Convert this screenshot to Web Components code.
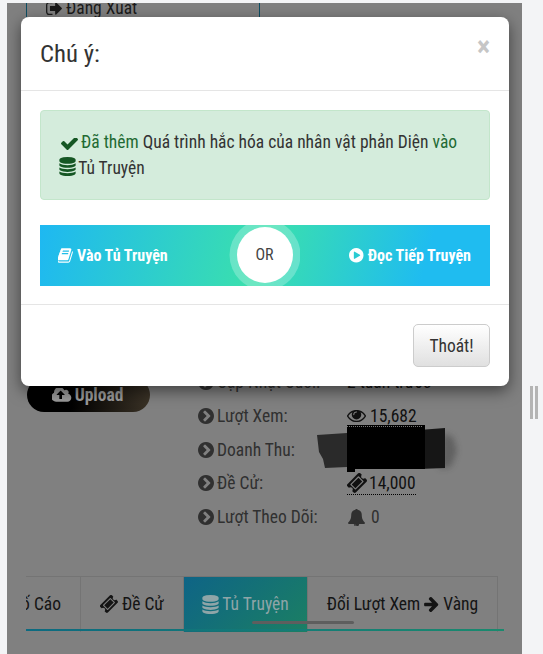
<!DOCTYPE html>
<html><head><meta charset="utf-8"><style>
html,body{margin:0;height:100%;background:#f3f4f6;overflow:hidden}
</style></head><body>
<app-page></app-page>
<script>
const FONT = `"Roboto Condensed","Liberation Sans Narrow",Roboto,sans-serif`;
const P = {
 check:['120 425 1552 1070','M1671 566q0 40-28 68l-724 724-136 136q-28 28-68 28t-68-28l-136-136-362-362q-28-28-28-68t28-68l136-136q28-28 68-28t68 28l294 295 656-657q28-28 68-28t68 28l136 136q28 28 28 68z'],
 db:['128 0 1536 1792','M896 768q237 0 443-43t325-127v170q0 69-103 128t-280 93.500-385 34.500-385-34.500-280-93.500-103-128v-170q119 84 325 127t443 43zm0 768q237 0 443-43t325-127v170q0 69-103 128t-280 93.500-385 34.500-385-34.500-280-93.500-103-128v-170q119 84 325 127t443 43zm0-384q237 0 443-43t325-127v170q0 69-103 128t-280 93.500-385 34.500-385-34.500-280-93.500-103-128v-170q119 84 325 127t443 43zm0-1152q208 0 385 34.500t280 93.500 103 128v128q0 69-103 128t-280 93.500-385 34.500-385-34.500-280-93.500-103-128v-128q0-69 103-128t280-93.500 385-34.500z'],
 book:['100 130 1580 1540','M1639 478q40 57 18 129l-275 906q-19 64-76.500 107.500t-122.500 43.500h-923q-77 0-148.500-53.500t-99.500-131.500q-24-67-2-127 0-4 3-27t4-37q1-8-3-21.500t-3-19.500q2-11 8-21t16.500-23.500 16.500-23.500q23-38 45-91.500t30-91.500q3-10 .5-30t-.5-28q3-11 17-28t17-23q21-36 42-92t25-90q1-9-2.500-32t.5-28q4-13 22-30.500t22-22.500q19-26 42.500-84.500t27.500-96.500q1-8-3-25.500t-2-26.500q2-8 9-18t18-23 17-21q8-12 16.500-30.500t15-35 16-36 19.500-32 26.500-23.500 36-11.500 47.500 5.500l-1 3q38-9 51-9h761q74 0 114 56t18 130l-274 906q-36 119-71.500 153.500t-128.500 34.500h-869q-27 0-38 15-11 16-1 43 24 70 144 70h923q29 0 56-15.500t35-41.500l300-987q7-22 5-57 38 15 59 43zm-1064 2q-4 13 2 22.500t20 9.500h608q13 0 25.500-9.500t16.500-22.500l21-64q4-13-2-22.500t-20-9.500h-608q-13 0-25.500 9.500t-16.500 22.500zm-83 256q-4 13 2 22.500t20 9.500h608q13 0 25.500-9.500t16.500-22.500l21-64q4-13-2-22.500t-20-9.500h-608q-13 0-25.500 9.500t-16.500 22.500z'],
 play:['128 128 1536 1536','M896 128q209 0 385.500 103t279.500 279.500 103 385.500-103 385.500-279.500 279.500-385.500 103-385.500-103-279.500-279.500-103-385.500 103-385.500 279.500-279.500 385.500-103zm384 823q32-18 32-55t-32-55l-544-320q-31-19-64-1-32 19-32 56v640q0 37 32 56 16 8 32 8 17 0 32-9z'],
 next:['128 128 1536 1536','M845 1395l454-454q19-19 19-45t-19-45l-454-454q-19-19-45-19t-45 19l-102 102q-19 19-19 45t19 45l307 307-307 307q-19 19-19 45t19 45l102 102q19 19 45 19t45-19zm819-499q0 209-103 385.500t-279.500 279.500-385.500 103-385.500-103-279.500-279.500-103-385.500 103-385.500 279.500-279.500 385.500-103 385.500 103 279.500 279.500 103 385.500z'],
 eye:['0 400 1792 1120','M1664 960q-152-236-381-353 61 104 61 225 0 185-131.500 316.500t-316.500 131.500-316.500-131.500-131.500-316.500q0-121 61-225-229 117-381 353 133 205 333.500 326.500t434.500 121.500 434.500-121.500 333.500-326.500zm-720-384q0-20-14-34t-34-14q-125 0-214.500 89.500t-89.500 214.500q0 20 14 34t34 14 34-14 14-34q0-86 61-147t147-61q20 0 34-14t14-34zm848 384q0 34-20 69-140 230-376.500 368.500t-499.500 138.500-499.500-139-376.500-368q-20-35-20-69t20-69q140-229 376.500-368t499.500-139 499.500 139 376.500 368q20 35 20 69z'],
 ticket:['60 60 1680 1680','M1024 452l316 316-572 572-316-316zm-211 979l618-618q19-19 19-45t-19-45l-362-362q-18-18-45-18t-45 18l-618 618q-19 19-19 45t19 45l362 362q18 18 45 18t45-18zm889-637l-907 908q-37 37-90.500 37t-90.500-37l-126-126q56-56 56-136t-56-136-136-56-136 56l-125-126q-37-37-37-90.500t37-90.500l907-906q37-37 90.500-37t90.500 37l125 125q-56 56-56 136t56 136 136 56 136-56l126 125q37 37 37 90.500t-37 90.500z'],
 bell:['64 64 1664 1664','M912 1696q0-16-16-16-59 0-101.500-42.500t-42.500-101.500q0-16-16-16t-16 16q0 73 51.500 124.500t124.500 51.500q16 0 16-16zm816-288q0 52-38 90t-90 38h-448q0 106-75 181t-181 75-181-75-75-181h-448q-52 0-90-38t-38-90q50-42 91-88t85-119.500 74.500-158.500 50-206 19.500-260q0-152 117-282.500t307-158.500q-8-19-8-39 0-40 28-68t68-28 68 28 28 68q0 20-8 39 190 28 307 158.500t117 282.500q0 139 19.500 260t50 206 74.500 158.500 85 119.500 91 88z'],
 arrow:['192 181 1408 1558','M1600 960q0 54-37 91l-651 651q-39 37-91 37-51 0-90-37l-75-75q-38-38-38-91t38-91l293-293h-704q-52 0-84.500-37.500t-32.500-90.500v-128q0-53 32.500-90.500t84.500-37.500h704l-293-294q-38-36-38-90t38-90l75-75q38-38 90-38 53 0 91 38l651 651q37 35 37 90z'],
 cloud:['0 256 1920 1280','M1216 864q0-14-9-23l-352-352q-9-9-23-9t-23 9l-351 351q-10 12-10 24 0 14 9 23t23 9h224v352q0 13 9.500 22.500t22.500 9.500h192q13 0 22.500-9.500t9.500-22.500v-352h224q13 0 22.500-9.500t9.500-22.500zm640 288q0 159-112.500 271.500t-271.500 112.500h-1088q-185 0-316.500-131.500t-131.500-316.500q0-130 70-240t188-165q-2-30-2-43 0-212 150-362t362-150q156 0 285.500 87t188.500 231q71-62 166-62 106 0 181 75t75 181q0 76-41 138 130 31 213.500 135.500t83.500 238.500z'],
 logout:['64 256 1568 1280','M704 1440q0 4 1 20t.5 26.500-3 23.500-10 19.500-20.500 6.500h-320q-119 0-203.500-84.500t-84.500-203.500v-704q0-119 84.500-203.500t203.500-84.500h320q13 0 22.500 9.500t9.500 22.500q0 4 1 20t.5 26.500-3 23.500-10 19.500-20.500 6.500h-320q-66 0-113 47t-47 113v704q0 66 47 113t113 47h312l11.500 1 11.500 3 8 5.500 7 9 2 13.500zm928-544q0 26-19 45l-544 544q-19 19-45 19t-45-19-19-45v-288h-448q-26 0-45-19t-19-45v-384q0-26 19-45t45-19h448v-288q0-26 19-45t45-19 45 19l544 544q19 19 19 45z']
};
const ic=(n,w,h,st='')=>`<svg viewBox="${P[n][0]}" width="${w}" height="${h}" style="flex:none;${st}"><path d="${P[n][1]}" fill="currentColor"/></svg>`;
class BaseEl extends HTMLElement{
  render(html){ this.attachShadow({mode:'open'}).innerHTML=html; }
}
class PageBackdrop extends BaseEl{ connectedCallback(){ this.render(`
<style>
:host{display:block;position:relative;width:515px;height:651px;margin:3px 0 0 7px;background:#808080;color:#1c1c1c;font:17.5px/20px ${FONT};overflow:hidden}
.top{display:flex;align-items:center;gap:4px;width:234px;height:16px;margin-left:19px;padding:0 0 2px 19px;box-sizing:border-box;border:solid #0e4e63;border-width:0 1px;margin-top:-2px;color:#1a1a1a}
.mid{display:flex;padding:0 0 0 20px;margin-top:361px}
.upload{align-self:flex-start;display:flex;align-items:center;justify-content:center;gap:3px;width:123px;height:34px;padding-right:2px;box-sizing:border-box;border-radius:17px;background:linear-gradient(90deg,#000 35%,#3a3226);color:#9b9b9b;font-weight:700}
.stats{margin-left:48px;margin-top:-6px}
stat-row{margin-bottom:13.75px}
.mask{position:absolute;left:300px;top:416px;width:160px;height:56px}
.tabs{position:absolute;left:19px;top:573px;width:472px;height:56px;border-top:1px solid #747474;border-right:1px solid #747474;box-sizing:border-box;display:flex;overflow:hidden}
.line{position:absolute;left:19px;top:626px;width:478px;height:2px;background:linear-gradient(90deg,#0c6a80,#1a8a6e)}
.thumb{position:absolute;left:245px;top:618px;width:102px;height:3px;background:#5e5e5e;border-radius:2px}
</style>
<div class="top">${ic('logout',16,13)}<span>Đăng Xuất</span></div>
<div class="mid">
  <div class="upload">${ic('cloud',20,14)}<span>Upload</span></div>
  <div class="stats">
    <stat-row label="Cập Nhật Cuối:"><span>2 tuần trước</span></stat-row>
    <stat-row label="Lượt Xem:" rule><span>${ic('eye',19,12,'margin-right:1px')}15,682</span></stat-row>
    <stat-row label="Doanh Thu:"></stat-row>
    <stat-row label="Đề Cử:" rule><span>${ic('ticket',20,20,'margin-right:-1px')}14,000</span></stat-row>
    <stat-row label="Lượt Theo Dõi:"><span style="color:#303030">${ic('bell',17,17,'margin:0 3px 0 1px')}0</span></stat-row>
  </div>
</div>
<svg class="mask" viewBox="0 0 160 56">
  <defs><filter id="b" x="-50%" y="-50%" width="200%" height="200%"><feGaussianBlur stdDeviation="3"/></filter></defs>
  <path d="M136 14L146 18 150 32 144 48 132 50z" fill="#333" opacity=".4" filter="url(#b)"/>
  <path d="M10 16L40 14V48L18 49 16 40 12 33z" fill="#2a2a2a"/>
  <path d="M112 11L138 9V49L112 50z" fill="#161616"/>
  <path d="M40 6H118V50H48V53H40z" fill="#000"/>
  <path d="M40 7.500H116" stroke="#777" stroke-width="1" stroke-dasharray="1 1"/>
</svg>
<div class="tabs">
  <tab-item w="55" first>Tố Cáo</tab-item>
  <tab-item w="103">${ic('ticket',18,18,'margin-right:1px')}<span>Đề Cử</span></tab-item>
  <tab-item w="124" active>${ic('db',17,19)}<span>Tủ Truyện</span></tab-item>
  <tab-item w="190">Đổi Lượt Xem${ic('arrow',15,15,'margin:0 1px')}Vàng</tab-item>
</div>
<div class="line"></div><div class="thumb"></div>
<slot></slot>`);}}
class StatRow extends BaseEl{ connectedCallback(){ this.render(`
<style>
:host{display:flex;height:20px;font:17.5px/20px ${FONT};color:#2a2a2a}
.l{display:flex;align-items:center;gap:3px;width:149px;color:#303030}
.v{display:inline-block;color:#111;align-self:flex-start}
.v.rule{border-bottom:1px dotted #000;height:21px}
::slotted(span){display:inline-flex;align-items:center;gap:3px;height:20px}
</style>
<div class="l">${ic('next',16,16)}<span>${this.getAttribute('label')}</span></div>
<div class="v ${this.hasAttribute('rule')?'rule':''}"><slot></slot></div>`);}}
class TabItem extends BaseEl{ connectedCallback(){ const a=this.hasAttribute('active'); const f=this.hasAttribute('first'); this.render(`
<style>
:host{display:flex;align-items:center;justify-content:${f?'flex-end':'center'};gap:3px;box-sizing:border-box;flex:none;width:${this.getAttribute('w')}px;height:100%;padding:0 ${f?'19px':'0'} 1px 0;font:17.5px/20px ${FONT};color:${a?'#8fa5a8':'#141414'};border-right:1px solid #747474;background:${a?'linear-gradient(135deg,#0e6486,#1b7f63)':'none'};white-space:pre;overflow:hidden}
</style><slot></slot>`);}}
class NoticeModal extends BaseEl{ connectedCallback(){ this.render(`
<style>
:host{position:absolute;left:14px;top:14px;width:488px;height:369px;box-sizing:border-box;background:#fff;border-radius:8px;box-shadow:0 5px 15px rgba(0,0,0,.5);color:#333;font:17.5px/26px ${FONT};display:flex;flex-direction:column}
header{height:74px;box-sizing:border-box;border-bottom:1px solid #e5e5e5;display:flex;justify-content:space-between;padding:1px 19px 0;align-items:center;flex:none}
h4{margin:0;font:400 24.8px/30px ${FONT};color:#333}
.x{font:700 28px/28px ${FONT};color:#c6c6c6;margin-top:-14px}
.body{padding:19px;height:214px;box-sizing:border-box;border-bottom:1px solid #e5e5e5;flex:none}
.alert{height:90px;box-sizing:border-box;background:#d4ecdc;border:1px solid #c3e6cb;border-radius:4px;padding:18px 18px;color:#333;white-space:nowrap}
.alert em{font-style:normal;color:#1f6a33}
.alert svg{color:#155724;vertical-align:-2px;margin-right:-1.500px}
.alert svg.c{margin-left:2px;margin-right:-1px}
.cta{margin-top:25px;height:61px;position:relative;display:flex;justify-content:space-between;align-items:center;padding:0 19px 0 18px;font:700 16px/20px ${FONT};color:#fff;background:linear-gradient(105deg,#1eb8f2 0%,#3adfae 48%,#3adfae 50%,#1fbcf0 85%)}
.cta span{display:inline-flex;align-items:center;gap:4px}
.or{position:absolute;left:189px;top:0;width:71px;height:61px;overflow:hidden}
.or div{position:absolute;left:7.500px;top:2px;width:56px;height:56px;line-height:56px;border-radius:50%;background:#fff;color:#444;font-weight:400;text-align:center;box-shadow:0 0 0 7.500px rgba(255,255,255,.25)}
footer{flex:1;display:flex;justify-content:flex-end;padding:19px}
button{width:77px;height:43px;border:1px solid #ccc;border-radius:5px;background:linear-gradient(#fff,#e0e0e0);font:17.5px/20px ${FONT};color:#333;padding:0}
</style>
<header><h4>Chú ý:</h4><span class="x">×</span></header>
<div class="body">
  <div class="alert"><em>${ic('check',17,11.7).replace('<svg','<svg class="c"')} Đã thêm</em> Quá trình hắc hóa của nhân vật phản Diện <em>vào</em><br>${ic('db',17,19)} Tủ Truyện</div>
  <div class="cta"><span>${ic('book',15,15)}Vào Tủ Truyện</span><span>${ic('play',14.5,14.5)}Đọc Tiếp Truyện</span><div class="or"><div>OR</div></div></div>
</div>
<footer><button>Thoát!</button></footer>`);}}
class AppPage extends BaseEl{ connectedCallback(){ this.render(`
<style>
:host{display:block;width:543px;height:654px;position:relative}
.sb{position:absolute;left:530px;top:383px;width:8px;height:33px;display:flex;gap:2px}
.sb i{display:block;width:3px;background:#b4b4b4}
</style>
<page-backdrop><notice-modal></notice-modal></page-backdrop>
<div class="sb"><i></i><i></i></div>`);}}
customElements.define('stat-row',StatRow);
customElements.define('tab-item',TabItem);
customElements.define('notice-modal',NoticeModal);
customElements.define('page-backdrop',PageBackdrop);
customElements.define('app-page',AppPage);
</script></body></html>
